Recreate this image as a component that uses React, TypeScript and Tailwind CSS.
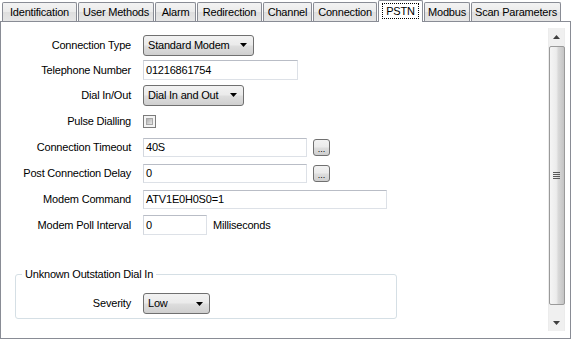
import React from "react";

const tabs: { label: string; w: number; selected?: boolean }[] = [
  { label: "Identification", w: 75 },
  { label: "User Methods", w: 76 },
  { label: "Alarm", w: 41 },
  { label: "Redirection", w: 65 },
  { label: "Channel", w: 49 },
  { label: "Connection", w: 64 },
  { label: "PSTN", w: 45, selected: true },
  { label: "Modbus", w: 46 },
  { label: "Scan Parameters", w: 90 },
];

function Arrow() {
  return (
    <svg width="7" height="4" viewBox="0 0 7 4" className="shrink-0">
      <path d="M0 0H7L3.5 4Z" fill="#000" />
    </svg>
  );
}

function Combo({ value, w }: { value: string; w: number }) {
  return (
    <div
      style={{ width: w }}
      className="h-[21px] border border-[#707070] rounded-[3px] pl-[4px] pr-[6px] flex items-center justify-between bg-[linear-gradient(#f2f2f2,#ebebeb_45%,#dddddd_55%,#cfcfcf)]"
    >
      <span className="leading-none">{value}</span>
      <Arrow />
    </div>
  );
}

function TextBox({ value, w, h = 20 }: { value: string; w: number; h?: number }) {
  return (
    <div
      style={{ width: w, height: h }}
      className="border border-[#dde1e7] border-t-[#b9bdc6] border-l-[#d3d7de] bg-white pl-[2px] flex items-center"
    >
      <span className="leading-none">{value}</span>
    </div>
  );
}

function Dots() {
  return (
    <div className="ml-[6px] w-[17px] h-[17px] border border-[#707070] rounded-[3px] bg-[linear-gradient(#f2f2f2,#ebebeb_45%,#dddddd_55%,#cfcfcf)] flex items-end justify-center">
      <span className="text-[9px] leading-[11px] tracking-[0px]">...</span>
    </div>
  );
}

function Row({ label, h, children }: { label: string; h: number; children?: React.ReactNode }) {
  return (
    <div style={{ height: h }} className="grid grid-cols-[130px_1fr] gap-x-[12px] items-center">
      <div className="text-right whitespace-nowrap">{label}</div>
      <div className="flex items-center">{children}</div>
    </div>
  );
}

function Scrollbar() {
  return (
    <div className="w-[17px] h-[303px] mt-[6px] mr-[5px] bg-[#f0f0f0] border-x border-[#ececec] flex flex-col items-center">
      <div className="h-[17px] w-full flex items-center justify-center">
        <svg width="7" height="4" viewBox="0 0 7 4">
          <path d="M0 4H7L3.5 0Z" fill="#404040" />
        </svg>
      </div>
      <div className="mt-[1px] h-[259px] w-[16px] rounded-[2px] border border-[#9a9a9a] bg-[linear-gradient(to_right,#f5f5f5,#ececec_45%,#d8d8d8_60%,#c4c4c4)] flex flex-col items-center justify-center gap-[1px]">
        <div className="w-[7px] h-[1px] bg-[#5a5a5a]" />
        <div className="w-[7px] h-[1px] bg-[#5a5a5a]" />
        <div className="w-[7px] h-[1px] bg-[#5a5a5a]" />
        <div className="w-[7px] h-[1px] bg-[#5a5a5a]" />
      </div>
      <div className="flex-1" />
      <div className="h-[17px] w-full flex items-center justify-center">
        <svg width="7" height="4" viewBox="0 0 7 4">
          <path d="M0 0H7L3.5 4Z" fill="#404040" />
        </svg>
      </div>
    </div>
  );
}

export default function App() {
  return (
    <div className="w-[573px] h-[340px] bg-white overflow-hidden font-['Liberation_Sans',Arial,sans-serif] text-[11px] tracking-[-0.2px] text-black">
      <div className="h-[21px] pl-[2px] flex items-end gap-[1px]">
        {tabs.map((t) =>
          t.selected ? (
            <div
              key={t.label}
              style={{ width: t.w }}
              className="relative z-10 -mb-px h-[22px] border border-b-0 border-[#898c95] rounded-t-[2px] bg-white flex justify-center pt-[2px]"
            >
              <div className="h-[16px] w-[37px] border border-dotted border-black flex items-center justify-center leading-none">
                {t.label}
              </div>
            </div>
          ) : (
            <div
              key={t.label}
              style={{ width: t.w }}
              className="h-[19px] border border-b-0 border-[#898c95] rounded-t-[2px] bg-[linear-gradient(#f3f3f3,#ebebeb_50%,#dedede_50%,#e6e6e6)] flex items-center justify-center whitespace-nowrap leading-none"
            >
              {t.label}
            </div>
          )
        )}
      </div>
      <div className="w-[571px] h-[318px] border border-[#898c95] bg-white flex">
        <div className="flex-1 pt-[10px]">
          <Row label="Connection Type" h={26}>
            <Combo value="Standard Modem" w={111} />
          </Row>
          <Row label="Telephone Number" h={24}>
            <TextBox value="01216861754" w={155} />
          </Row>
          <Row label="Dial In/Out" h={26}>
            <Combo value="Dial In and Out" w={101} />
          </Row>
          <Row label="Pulse Dialling" h={26}>
            <div className="w-[13px] h-[13px] border border-[#7b7b7b] bg-[#f4f4f4] p-[2px]">
              <div className="w-full h-full bg-[linear-gradient(135deg,#b0b0b0,#e8e8e8)] border border-[#a8a8a8]" />
            </div>
          </Row>
          <Row label="Connection Timeout" h={26}>
            <TextBox value="40S" w={164} h={19} />
            <Dots />
          </Row>
          <Row label="Post Connection Delay" h={26}>
            <TextBox value="0" w={164} h={19} />
            <Dots />
          </Row>
          <Row label="Modem Command" h={26}>
            <TextBox value="ATV1E0H0S0=1" w={244} h={19} />
          </Row>
          <Row label="Modem Poll Interval" h={26}>
            <TextBox value="0" w={64} h={20} />
            <span className="ml-[6px]">Milliseconds</span>
          </Row>
          <div className="relative mt-[36px] ml-[14px] w-[382px] h-[45px] border border-[#d5dfe5] rounded-[3px] pt-[18px]">
            <span className="absolute left-[6px] top-[-7px] px-[3px] bg-white leading-[13px] whitespace-nowrap">
              Unknown Outstation Dial In
            </span>
            <div className="grid grid-cols-[115px_1fr] gap-x-[12px] items-center h-[21px]">
              <div className="text-right">Severity</div>
              <Combo value="Low" w={67} />
            </div>
          </div>
        </div>
        <Scrollbar />
      </div>
    </div>
  );
}
